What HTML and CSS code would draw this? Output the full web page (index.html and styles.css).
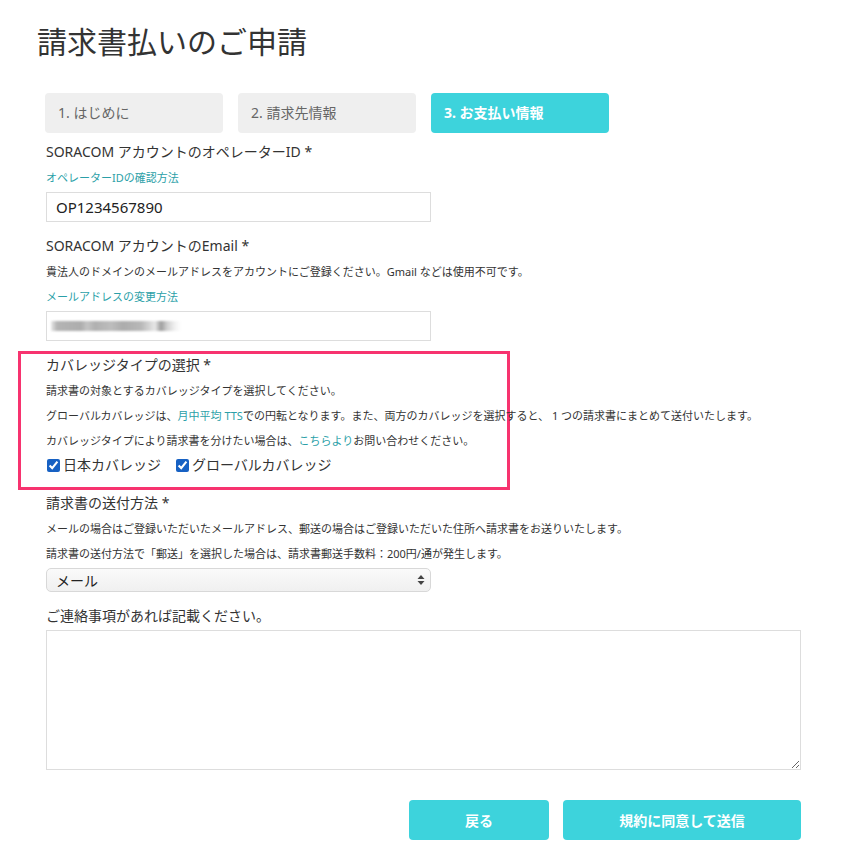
FILE: index.html
```html
<!DOCTYPE html>
<html lang="ja">
<head>
<meta charset="utf-8">
<title>請求書払いのご申請</title>
<link rel="stylesheet" href="styles.css">
</head>
<body>
<div class="page">
  <h1 class="title">請求書払いのご申請</h1>
  <div class="steps">
    <div class="step">1. はじめに</div>
    <div class="step">2. 請求先情報</div>
    <div class="step active">3. お支払い情報</div>
  </div>

  <div class="field">
    <div class="label">SORACOM アカウントのオペレーターID *</div>
    <div class="note"><a class="link" href="#">オペレーターIDの確認方法</a></div>
    <div class="input">OP1234567890</div>
  </div>

  <div class="field">
    <div class="label">SORACOM アカウントのEmail *</div>
    <div class="note">貴法人のドメインのメールアドレスをアカウントにご登録ください。Gmail などは使用不可です。</div>
    <div class="note"><a class="link" href="#">メールアドレスの変更方法</a></div>
    <div class="input"><span class="masked"></span></div>
  </div>

  <div class="highlight">
    <div class="label">カバレッジタイプの選択 *</div>
    <div class="note">請求書の対象とするカバレッジタイプを選択してください。</div>
    <div class="note">グローバルカバレッジは、<a class="link" href="#">月中平均 TTS</a>での円転となります。また、両方のカバレッジを選択すると、 1 つの請求書にまとめて送付いたします。</div>
    <div class="note">カバレッジタイプにより請求書を分けたい場合は、<a class="link" href="#">こちらより</a>お問い合わせください。</div>
    <div class="checks">
      <label class="check"><input type="checkbox" checked>日本カバレッジ</label>
      <label class="check"><input type="checkbox" checked>グローバルカバレッジ</label>
    </div>
  </div>

  <div class="field tight">
    <div class="label">請求書の送付方法 *</div>
    <div class="note">メールの場合はご登録いただいたメールアドレス、郵送の場合はご登録いただいた住所へ請求書をお送りいたします。</div>
    <div class="note">請求書の送付方法で「郵送」を選択した場合は、請求書郵送手数料：200円/通が発生します。</div>
    <div class="select">
      <span>メール</span>
      <svg class="arrows" width="8" height="12" viewBox="0 0 8 12"><path d="M4 1 L7.5 5 L0.5 5 Z M0.5 7 L7.5 7 L4 11 Z" fill="#444"/></svg>
    </div>
  </div>

  <div class="field">
    <div class="label">ご連絡事項があれば記載ください。</div>
    <textarea class="textarea"></textarea>
  </div>

  <div class="actions">
    <button class="btn back">戻る</button>
    <button class="btn submit">規約に同意して送信</button>
  </div>
</div>
</body>
</html>
```

FILE: styles.css
```css
* { box-sizing: border-box; }
html, body { margin: 0; padding: 0; background: #fff; }
body {
  font-family: "Noto Sans", "Noto Sans CJK JP", sans-serif;
  color: #333;
}
.page {
  padding-left: 46px;
  width: 801px;
}
.title {
  font-size: 30px;
  font-weight: 400;
  line-height: 36px;
  margin: 24px 0 33px -9px;
  color: #333;
}
.steps {
  display: flex;
  gap: 15px;
  margin-left: -1px;
}
.step {
  width: 178px;
  height: 40px;
  border-radius: 4px;
  background: #efefef;
  color: #666;
  font-size: 14px;
  line-height: 40px;
  padding-left: 13px;
}
.step.active {
  background: #3dd3dc;
  color: #fff;
  font-weight: 700;
}
.field { margin-top: 9px; }
.field + .field { margin-top: 14px; }
.field.tight { margin-top: 3px; }
.label {
  font-size: 14px;
  line-height: 20px;
  margin-bottom: 3px;
  color: #333;
}
.note {
  font-size: 11px;
  line-height: 25px;
  color: #333;
  white-space: nowrap;
}
.link { color: #2b9fa8; text-decoration: none; }
.input {
  margin-top: 2px;
  width: 385px;
  height: 30px;
  border: 1px solid #ddd;
  font-size: 15px;
  line-height: 28px;
  padding-left: 9px;
  color: #222;
}
.masked {
  display: inline-block;
  vertical-align: middle;
  margin-top: -3px;
  margin-left: -5px;
  width: 130px;
  height: 10px;
  filter: blur(1.2px);
  background: linear-gradient(90deg,
    #e8e8e8 0px, #b4b4b4 6px, #adadad 30px, #c4c4c4 36px, #b0b0b0 44px,
    #bdbdbd 60px, #acacac 72px, #b8b8b8 90px, #dadada 100px, #e8e8e8 104px,
    #9c9c9c 110px, #d0d0d0 116px, #f2f2f2 124px, #fff 130px);
}
.highlight {
  margin: 10px 0 0 -28px;
  width: 492px;
  border: 3px solid #f7336f;
  padding: 1px 0 12px 25px;
}
.checks {
  display: flex;
  gap: 14px;
  margin-top: 2px;
  height: 20px;
  align-items: center;
}
.check {
  display: flex;
  align-items: center;
  font-size: 14px;
  line-height: 20px;
  color: #333;
}
.check input {
  margin: 0 3px 0 1px;
  width: 13px;
  height: 13px;
  accent-color: #1761c3;
}
.select {
  margin-top: 2px;
  width: 385px;
  height: 24px;
  border: 1px solid #d8d8d8;
  border-radius: 5px;
  background: linear-gradient(#fafafa, #f0f0f0);
  display: flex;
  align-items: center;
  justify-content: space-between;
  padding: 0 5px 0 9px;
  font-size: 14px;
  color: #222;
}
.arrows { display: block; }
.textarea {
  display: block;
  margin-top: 4px;
  width: 755px;
  height: 140px;
  border: 1px solid #ddd;
  resize: both;
  font-family: inherit;
}
.actions {
  display: flex;
  justify-content: flex-end;
  gap: 14px;
  margin-top: 30px;
}
.btn {
  height: 40px;
  border: 0;
  border-radius: 4px;
  background: #3dd3dc;
  color: #fff;
  font-family: inherit;
  font-size: 14px;
  font-weight: 700;
}
.btn.back { width: 140px; }
.btn.submit { width: 238px; }
```
